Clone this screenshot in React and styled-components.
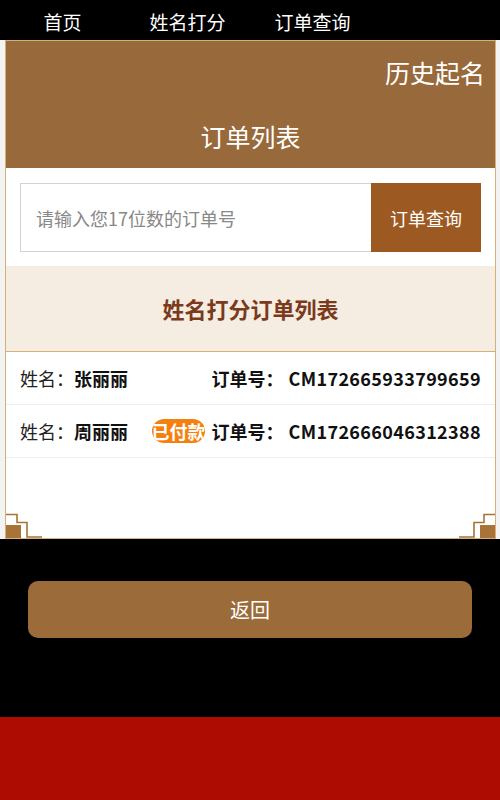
import React from 'react';
import styled, { createGlobalStyle } from "styled-components";

const GlobalStyle = createGlobalStyle`
    body {
        margin: 0;
        background: #000;
        font-family: "Noto Sans CJK SC", "Noto Sans", sans-serif;
    }
`;

const orders = [
    { name: '张丽丽', no: 'CM172665933799659', paid: false },
    { name: '周丽丽', no: 'CM172666046312388', paid: true },
];

const Corner = ({ right }) => (
    <CornerSvg $right={right} width="36" height="33" viewBox="0 0 36 33">
        <rect x="0" y="20" width="15" height="13" fill="#a87338" />
        <path d="M0 9.5 H11 V17.5 H21 V32 H36" fill="none" stroke="#a87338" strokeWidth="1.6" />
    </CornerSvg>
);

const App = () => {
    return (
        <Page>
            <GlobalStyle />
            <Nav>
                <NavItem>首页</NavItem>
                <NavItem>姓名打分</NavItem>
                <NavItem>订单查询</NavItem>
            </Nav>

            <Content>
                <Card>
                    <Header>
                        <HistoryLink>历史起名</HistoryLink>
                        <HeaderTitle>订单列表</HeaderTitle>
                    </Header>

                    <SearchBar>
                        <SearchInput placeholder="请输入您17位数的订单号" />
                        <SearchButton>订单查询</SearchButton>
                    </SearchBar>

                    <SectionTitle>姓名打分订单列表</SectionTitle>

                    {orders.map(o => (
                        <OrderRow key={o.no}>
                            <span>姓名：<Strong>{o.name}</Strong></span>
                            <OrderInfo>
                                {o.paid && <Badge>已付款</Badge>}
                                <Strong>订单号：</Strong>
                                <OrderNo>{o.no}</OrderNo>
                            </OrderInfo>
                        </OrderRow>
                    ))}

                    <Corner />
                    <Corner right />
                </Card>
            </Content>

            <Footer>
                <BackButton>返回</BackButton>
            </Footer>
            <RedBar />
        </Page>
    );
};

const Page = styled.div`
    display: flex;
    flex-direction: column;
    min-height: 800px;
    background: #000;
`;

const Nav = styled.nav`
    display: grid;
    grid-template-columns: repeat(4, 1fr);
    height: 40px;
    background: #000;
    align-items: center;
`;

const NavItem = styled.a`
    color: #fff;
    font-size: 19px;
    text-align: center;
    line-height: 40px;
    margin-top: 2px;
`;

const Content = styled.div`
    background: #f3f3f3;
    padding: 0 4px 0 5px;
`;

const Card = styled.div`
    position: relative;
    box-sizing: border-box;
    height: 499px;
    background: #fff;
    border: 1px solid #d6b079;
`;

const Header = styled.div`
    display: flex;
    flex-direction: column;
    height: 127px;
    background: #986a3b;
    color: #fff;
`;

const HistoryLink = styled.div`
    align-self: flex-end;
    font-size: 25px;
    line-height: 32px;
    margin: 15px 10px 0 0;
`;

const HeaderTitle = styled.div`
    text-align: center;
    font-size: 25px;
    line-height: 32px;
    margin-top: 32px;
`;

const SearchBar = styled.div`
    display: flex;
    padding: 15px 14px 14px;
`;

const SearchInput = styled.input`
    flex: 1;
    min-width: 0;
    box-sizing: border-box;
    height: 69px;
    border: 1px solid #d3d3d3;
    border-right: none;
    padding: 0 15px;
    font-family: inherit;
    font-size: 18px;
    outline: none;

    &::placeholder {
        color: #888;
    }
`;

const SearchButton = styled.button`
    width: 110px;
    height: 69px;
    border: none;
    background: #9c5a22;
    color: #fff;
    font-family: inherit;
    font-size: 18px;
`;

const SectionTitle = styled.div`
    height: 85px;
    line-height: 85px;
    text-align: center;
    background: #f5ece2;
    border-bottom: 1px solid #d6b079;
    color: #7a3a1b;
    font-size: 22px;
    font-weight: bold;
`;

const OrderRow = styled.div`
    display: flex;
    align-items: center;
    justify-content: space-between;
    height: 52px;
    padding: 0 14px;
    border-bottom: 1px solid #eee;
    font-size: 18px;
    color: #222;
`;

const Strong = styled.span`
    font-weight: bold;
    color: #111;
`;

const OrderInfo = styled.div`
    display: flex;
    align-items: center;
`;

const OrderNo = styled(Strong)`
    margin-left: 5px;
    letter-spacing: 0.35px;
`;

const Badge = styled.span`
    display: inline-block;
    width: 53px;
    height: 24px;
    line-height: 24px;
    margin-right: 7px;
    border-radius: 12px;
    background: #f5800f;
    color: #fff;
    font-weight: bold;
    text-align: center;
    white-space: nowrap;
    overflow: hidden;
`;

const CornerSvg = styled.svg`
    position: absolute;
    bottom: 0;
    ${p => p.$right ? 'right: 0; transform: scaleX(-1);' : 'left: 0;'}
`;

const Footer = styled.div`
    height: 178px;
    padding: 42px 28px 0;
    box-sizing: border-box;
    background: #000;
`;

const BackButton = styled.button`
    display: block;
    width: 100%;
    height: 57px;
    border: none;
    border-radius: 10px;
    background: #9b6b3a;
    color: #fff;
    font-family: inherit;
    font-size: 20px;
`;

const RedBar = styled.div`
    flex: 1;
    background: #ad0c03;
`;

export default App;
